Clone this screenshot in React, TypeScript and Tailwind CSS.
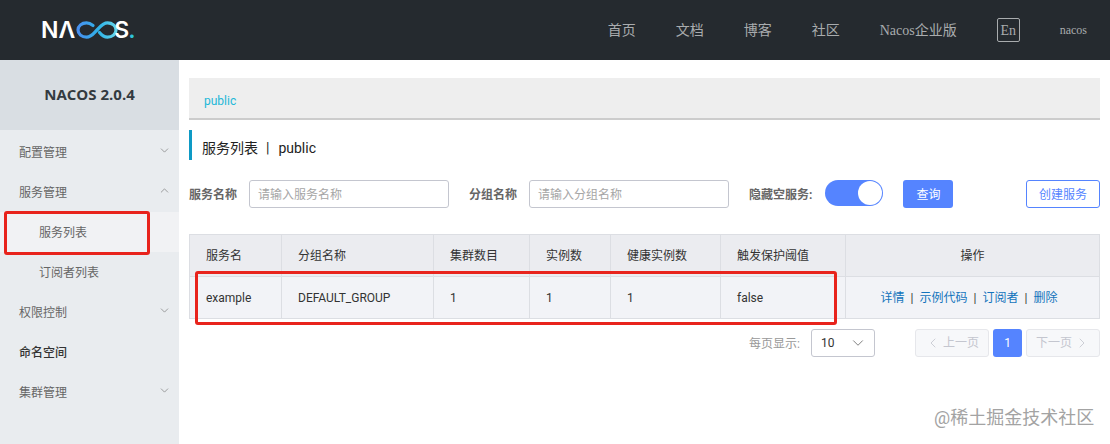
// App.tsx
import { ChevronDown, ChevronLeft, ChevronRight, ChevronUp } from "lucide-react";

const SANS = "font-['Roboto','Noto_Sans_CJK_SC',sans-serif]";

const NAV_ITEMS = ["首页", "文档", "博客", "社区", "Nacos企业版"];

const COLUMNS = [
  { label: "服务名", width: "w-[92px]" },
  { label: "分组名称", width: "w-[152px]" },
  { label: "集群数目", width: "w-[96px]" },
  { label: "实例数", width: "w-[81px]" },
  { label: "健康实例数", width: "w-[110px]" },
  { label: "触发保护阈值", width: "w-[125px]" },
];

const ROW = ["example", "DEFAULT_GROUP", "1", "1", "1", "false"];

function Logo() {
  return (
    <div className="flex items-center font-['Inter',sans-serif] text-[23px] font-semibold leading-none text-white">
      <span>NΛ</span>
      <svg width="43" height="18" viewBox="0 0 43 18" fill="none" className="ml-px">
        <defs>
          <linearGradient id="loop" x1="0" y1="0" x2="43" y2="0" gradientUnits="userSpaceOnUse">
            <stop offset="0" stopColor="#4a8cf0" />
            <stop offset="0.55" stopColor="#2fb4e8" />
            <stop offset="1" stopColor="#6fdcec" />
          </linearGradient>
        </defs>
        <path
          d="M17 4.5 C14.5 2.5 12.5 1.8 10.5 1.8 C5.8 1.8 2 5 2 9 C2 13 5.8 16.2 10.5 16.2 C15.5 16.2 18 12 21 9 C24 6 26.5 1.8 31.5 1.8 C36.2 1.8 40 5 40 9 C40 13 36.2 16.2 31.5 16.2 C28 16.2 25.5 14 23.5 11.5"
          stroke="url(#loop)"
          strokeWidth="3.2"
          strokeLinecap="round"
        />
      </svg>
      <span className="-ml-[5px]">S</span>
      <span className="-ml-px text-[#2fc4d8]">.</span>
    </div>
  );
}

function Header() {
  return (
    <header className="flex h-[60px] items-center bg-[#252a2f] pl-[41px] pr-[23px]">
      <Logo />
      <nav className="ml-auto flex items-center font-['Liberation_Serif','Noto_Sans_CJK_SC',serif] text-[14px] text-[#a9acae]">
        {NAV_ITEMS.map((item) => (
          <span key={item} className="mr-[40px]">
            {item}
          </span>
        ))}
        <span className="flex h-[24px] w-[23px] items-center justify-center rounded-[2px] border border-[#a9acae] text-[14px]">
          En
        </span>
        <span className="ml-[40px] text-[12px]">nacos</span>
      </nav>
    </header>
  );
}

function MenuItem({
  label,
  open,
  chevron,
  dark,
  sub,
  active,
}: {
  label: string;
  open?: boolean;
  chevron?: boolean;
  dark?: boolean;
  sub?: boolean;
  active?: boolean;
}) {
  return (
    <div
      className={`flex h-[40px] items-center pr-[8px] pt-px text-[12px] ${sub ? "pl-[39px]" : "pl-[19px]"} ${
        active ? "bg-[#f1f2f4]" : ""
      } ${dark ? "font-medium text-[#333333]" : "text-[#666666]"}`}
    >
      <span>{label}</span>
      {chevron &&
        (open ? (
          <ChevronUp size={13} strokeWidth={1.25} className="-mt-[5px] ml-auto text-[#777777]" />
        ) : (
          <ChevronDown size={13} strokeWidth={1.25} className="-mt-[5px] ml-auto text-[#777777]" />
        ))}
    </div>
  );
}

function Sidebar() {
  return (
    <aside className="w-[179px] shrink-0 bg-[#e9ecef]">
      <div className="flex h-[70px] items-center justify-center bg-[#d9dee3] pb-[1px] font-['Open_Sans',sans-serif] text-[15px] font-bold text-[#333a40]">
        NACOS 2.0.4
      </div>
      <div className="pt-[2px]">
        <MenuItem label="配置管理" chevron />
        <MenuItem label="服务管理" chevron open />
        <MenuItem label="服务列表" sub active />
        <MenuItem label="订阅者列表" sub />
        <MenuItem label="权限控制" chevron />
        <MenuItem label="命名空间" dark />
        <MenuItem label="集群管理" chevron />
      </div>
    </aside>
  );
}

function FilterInput({ label, placeholder }: { label: string; placeholder: string }) {
  return (
    <div className="flex items-center">
      <span className="mr-[12px] pt-px text-[12px] font-bold text-[#666666]">{label}</span>
      <div className="flex h-[28px] w-[200px] items-center rounded-[3px] border border-[#c4c6cf] bg-white px-[8px] pt-px text-[12px] text-[#a6a6a6]">
        {placeholder}
      </div>
    </div>
  );
}

function Filters() {
  return (
    <div className="mt-[20px] flex items-start">
      <div className="flex gap-[20px]">
        <FilterInput label="服务名称" placeholder="请输入服务名称" />
        <FilterInput label="分组名称" placeholder="请输入分组名称" />
      </div>
      <span className="ml-[20px] flex h-[28px] items-center pt-px text-[12px] font-bold text-[#666666]">隐藏空服务:</span>
      <div className="ml-[13px] flex h-[26px] w-[58px] items-center justify-end rounded-full bg-[#5584ff] pr-px">
        <span className="h-[24px] w-[24px] rounded-full bg-white" />
      </div>
      <button className="ml-[20px] h-[28px] w-[50px] rounded-[3px] bg-[#5584ff] pt-px text-[12px] text-white">查询</button>
      <button className="ml-auto h-[28px] w-[74px] rounded-[3px] border border-[#5584ff] bg-white pt-px text-[12px] text-[#5584ff]">
        创建服务
      </button>
    </div>
  );
}

function ServiceTable() {
  return (
    <table className="mt-[26px] w-full table-fixed border-collapse text-[12px] text-[#333333]">
      <thead>
        <tr className="h-[42px] bg-[#ebecf0]">
          {COLUMNS.map((col) => (
            <th key={col.label} className={`${col.width} border border-[#dcdee3] px-[16px] pt-px text-left font-normal`}>
              {col.label}
            </th>
          ))}
          <th className="border border-[#dcdee3] pt-px text-center font-normal">操作</th>
        </tr>
      </thead>
      <tbody>
        <tr className="h-[42px] bg-[#f2f3f7]">
          {ROW.map((cell, i) => (
            <td key={i} className="border border-[#dcdee3] px-[16px] pt-px">
              {cell}
            </td>
          ))}
          <td className="border border-[#dcdee3] pr-[7px] pt-px text-center text-[#1374bc]">
            详情<span className="mx-[6px] text-[#333333]">|</span>示例代码
            <span className="mx-[6px] text-[#333333]">|</span>订阅者
            <span className="mx-[6px] text-[#333333]">|</span>删除
          </td>
        </tr>
      </tbody>
    </table>
  );
}

function Pagination() {
  return (
    <div className="mt-[10px] flex items-center text-[12px]">
      <span className="ml-auto pt-px text-[#999999]">每页显示:</span>
      <div className="ml-[11px] flex h-[28px] w-[64px] items-center justify-between rounded-[3px] border border-[#c4c6cf] pl-[9px] pr-[7px] text-[#333333]">
        10
        <ChevronDown size={18} strokeWidth={1} className="text-[#555555]" />
      </div>
      <div className="ml-[40px] flex h-[28px] w-[74px] items-center justify-center gap-[2px] rounded-[3px] border border-[#e6e7eb] bg-[#f7f8fa] text-[#c4c6cf]">
        <ChevronLeft size={16} strokeWidth={1.25} />
        上一页
      </div>
      <div className="ml-[4px] flex h-[28px] w-[29px] items-center justify-center rounded-[3px] bg-[#5584ff] text-white">
        1
      </div>
      <div className="ml-[4px] flex h-[28px] w-[74px] items-center justify-center gap-[2px] rounded-[3px] border border-[#e6e7eb] bg-[#f7f8fa] text-[#c4c6cf]">
        下一页
        <ChevronRight size={16} strokeWidth={1.25} />
      </div>
    </div>
  );
}

export default function App() {
  return (
    <div className={`relative h-[444px] w-[1110px] overflow-hidden bg-white ${SANS}`}>
      <Header />
      <div className="flex h-[384px]">
        <Sidebar />
        <main className="min-w-0 flex-1 pl-[10px] pr-[10px] pt-[18px]">
          <div className="flex h-[42px] items-center border-b-2 border-[#cccccc] bg-[#eeeeee] pl-[15px] pt-[5px] text-[12px] text-[#22b8d8]">
            public
          </div>
          <div className="mt-[10px] flex h-[30px] items-center border-l-[3px] border-[#0e9ac5] pl-[10px] pt-[7px] text-[14px] text-[#222222]">
            服务列表<span className="ml-[8px] mr-[9px]">|</span>public
          </div>
          <Filters />
          <ServiceTable />
          <Pagination />
        </main>
      </div>

      {/* annotations on top of the screenshot */}
      <div className="absolute left-[4px] top-[211px] h-[44px] w-[146px] rounded-[3px] border-[3px] border-[#e8231c]" />
      <div className="absolute left-[195px] top-[271px] h-[54px] w-[642px] rounded-[3px] border-[3px] border-[#e8231c]" />
      <span className="absolute left-[934px] top-[404px] whitespace-nowrap text-[18px] text-[#a3a3a3]">
        @稀土掘金技术社区
      </span>
    </div>
  );
}
